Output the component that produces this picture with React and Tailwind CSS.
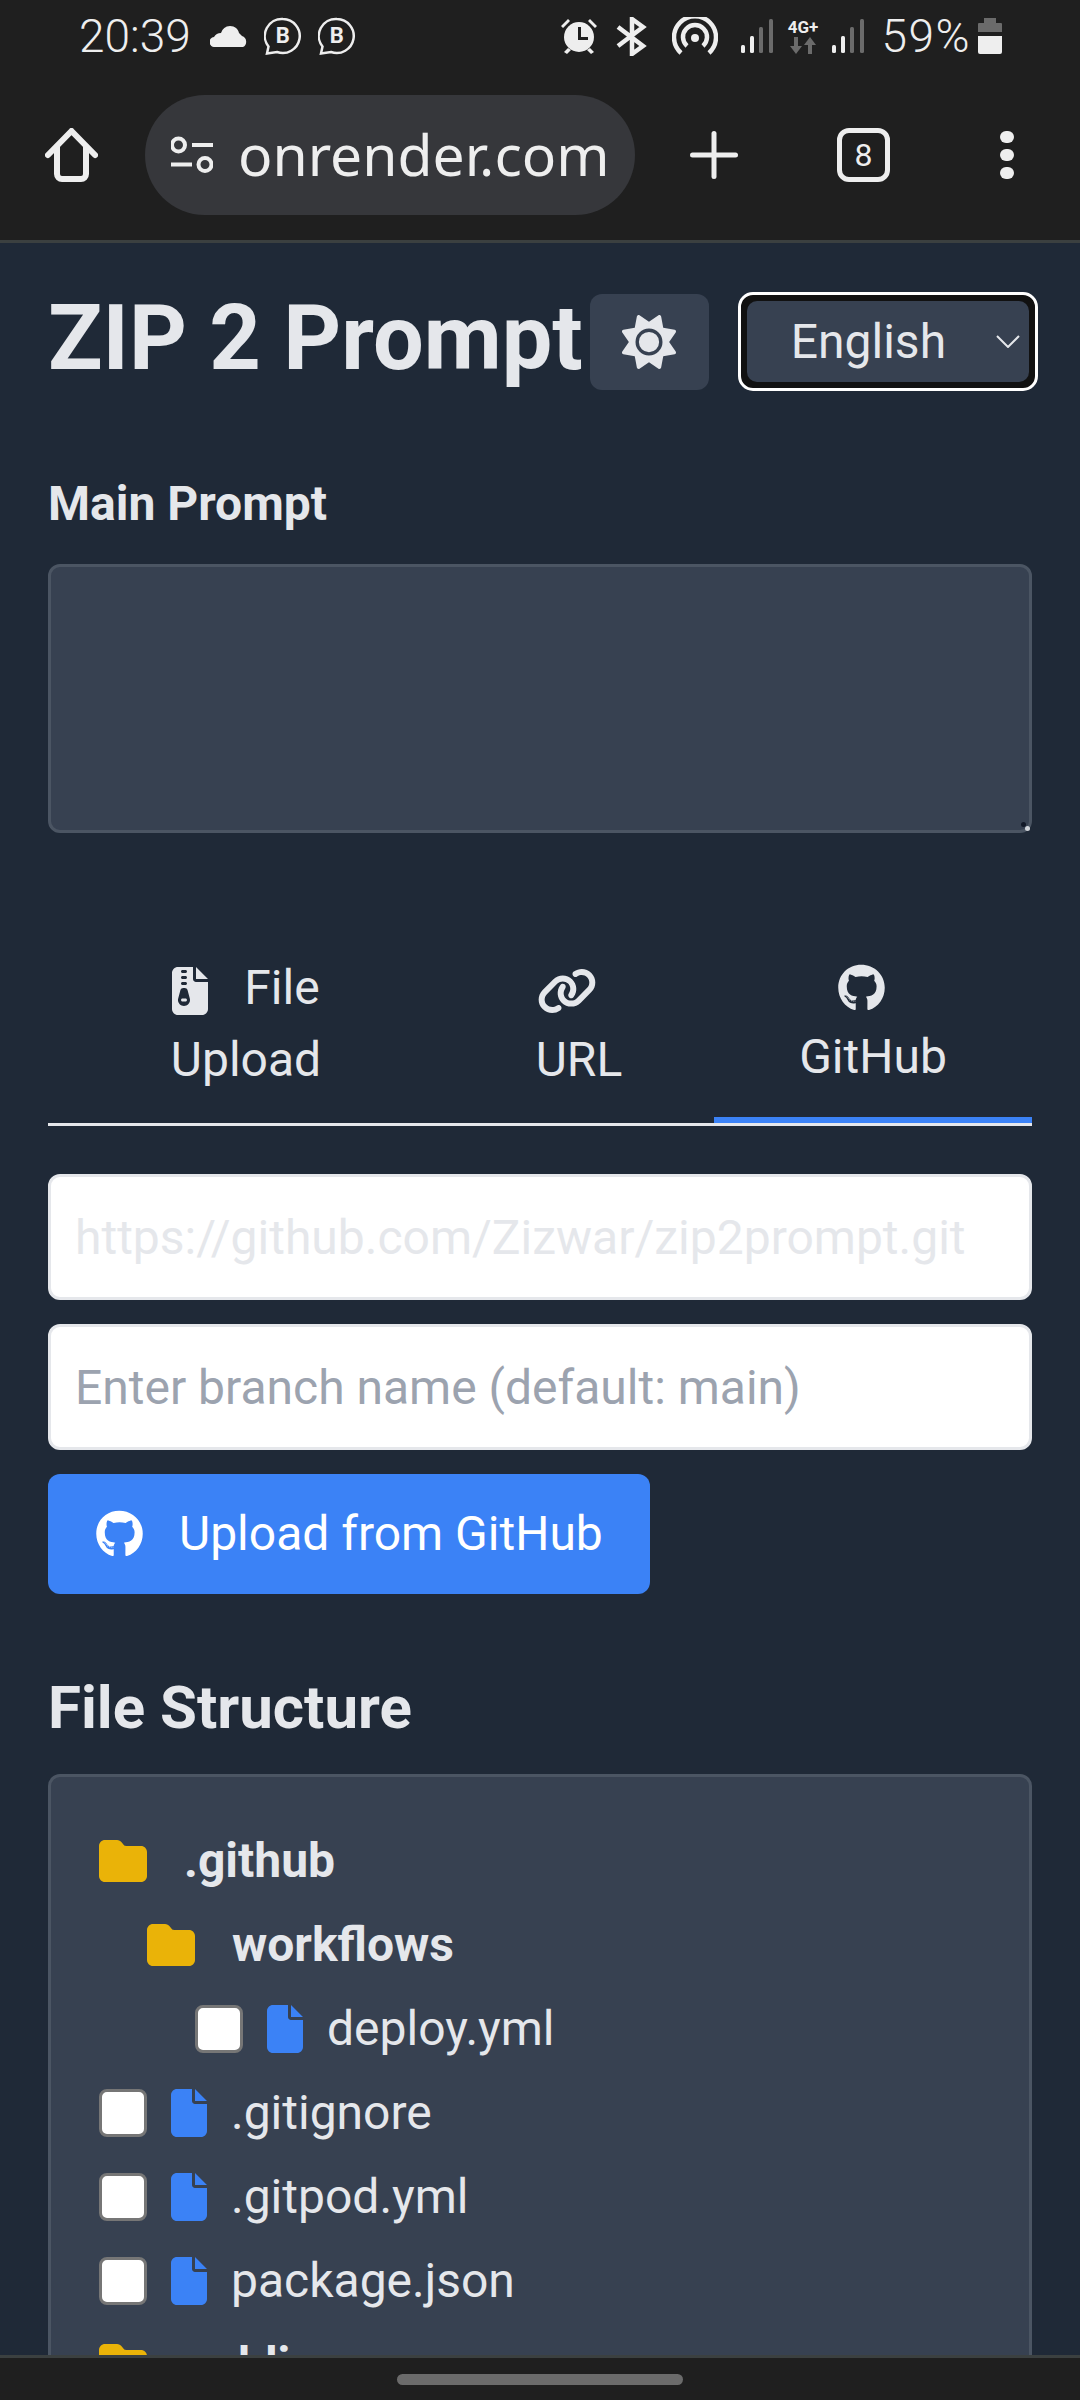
import { FaFileZipper, FaFile, FaFolder, FaGithub, FaSun, FaLink } from "react-icons/fa6";

function Signal() {
  return (
    <svg width="32" height="34" viewBox="0 0 32 34">
      <rect x="0" y="26" width="4" height="8" rx="1.5" fill="#eeeeee" />
      <rect x="9" y="17" width="4" height="17" rx="1.5" fill="#eeeeee" />
      <rect x="18" y="8" width="4" height="26" rx="1.5" fill="#6b6b6b" />
      <rect x="28" y="0" width="4" height="34" rx="1.5" fill="#6b6b6b" />
    </svg>
  );
}

function BusinessChat() {
  return (
    <div className="relative w-[38px] h-[38px]">
      <svg width="38" height="38" viewBox="0 0 38 38" fill="none">
        <path d="M19 2a17 17 0 1 1-6 33l-10 1.500 1.500-7A17 17 0 0 1 19 2z" stroke="#eeeeee" strokeWidth="2.500" />
      </svg>
      <span className="absolute inset-0 flex items-center justify-center text-[22px] font-bold text-[#eeeeee] leading-none">B</span>
    </div>
  );
}

function StatusBar() {
  return (
    <div className="h-[72px] flex items-center pl-[79px] pr-[78px] text-[#eeeeee]">
      <span className="text-[46px] font-light leading-none">20:39</span>
      <svg className="ml-[19px]" width="38" height="21" viewBox="0 0 38 21" fill="#eeeeee">
        <path d="M5 21a5 5 0 0 1-1-10 8 8 0 0 1 7-4 10 10 0 0 1 9-7c5 0 8 3 9 7 1 1 2 2 3 3a6 6 0 0 1 1 11z" />
      </svg>
      <div className="ml-[16px]"><BusinessChat /></div>
      <div className="ml-[16px]"><BusinessChat /></div>

      <div className="ml-auto flex items-center">
        <svg width="38" height="36" viewBox="0 0 38 36" fill="#eeeeee">
          <circle cx="19" cy="19" r="15" />
          <path d="M18 9h3v10h7v3H18z" fill="#1f1f1f" />
          <path d="M1 8 8 1l2 2-7 7zM37 8 30 1l-2 2 7 7z" />
          <path d="M8 30l3 2-4 4-3-2zM30 30l-3 2 4 4 3-2z" />
        </svg>
        <svg className="ml-[17px]" width="33" height="39" viewBox="0 0 33 39" fill="none" stroke="#eeeeee" strokeWidth="4.500">
          <path d="M3 10l25 19-11 8V2l11 8L3 29" />
        </svg>
        <svg className="ml-[24px]" width="46" height="38" viewBox="0 0 46 38" fill="none" stroke="#eeeeee" strokeWidth="4.500">
          <path d="M9 36a21 21 0 1 1 28 0" />
          <path d="M15 29a12 12 0 1 1 16 0" />
          <circle cx="23" cy="21" r="4" fill="#eeeeee" stroke="none" />
        </svg>
        <div className="ml-[23px]"><Signal /></div>
        <div className="ml-[12px] w-[35px] flex flex-col items-center">
          <span className="text-[17px] font-bold leading-[16px]">4G+</span>
          <svg className="mt-[2px]" width="26" height="17" viewBox="0 0 26 17" fill="#6b6b6b">
            <path d="M4 0h4v9h4l-6 8-6-8h4zM18 17h4V8h4l-6-8-6 8h4z" />
          </svg>
        </div>
        <div className="ml-[12px]"><Signal /></div>
        <span className="ml-[17px] text-[46px] font-light leading-none tracking-[1.500px]">59%</span>
        <svg className="ml-[7px]" width="24" height="36" viewBox="0 0 24 36">
          <path d="M6 0h12v5h5a1 1 0 0 1 1 1v8H0V6a1 1 0 0 1 1-1h5z" fill="#6b6b6b" />
          <path d="M0 18h24v16a2 2 0 0 1-2 2H2a2 2 0 0 1-2-2z" fill="#eeeeee" />
        </svg>
      </div>
    </div>
  );
}

function Toolbar() {
  return (
    <div className="h-[171px] pb-[3px] border-b-[3px] border-[#3b4040] flex items-center pl-[45px] text-[#eeeeee]">
      <svg width="53" height="54" viewBox="0 0 53 54" fill="none" stroke="#eeeeee" strokeWidth="6" strokeLinecap="round" strokeLinejoin="round">
        <path d="M3 27 26.500 3 50 27" />
        <path d="M12 19V46a5 5 0 0 0 5 5H36a5 5 0 0 0 5-5V19" />
      </svg>
      <div className="ml-[47px] w-[490px] h-[120px] rounded-[60px] bg-[#36373b] flex items-center pl-[26px]">
        <svg width="42" height="37" viewBox="0 0 42 37" fill="none" stroke="#eeeeee" strokeWidth="4">
          <circle cx="7.500" cy="9" r="6.500" />
          <path d="M21 9h21M0 28.500h21" />
          <circle cx="34" cy="28.500" r="6.500" />
        </svg>
        <span className="ml-[25px] text-[57px] leading-none font-['Noto_Sans',sans-serif]">onrender.com</span>
      </div>
      <svg className="ml-[55px]" width="48" height="48" viewBox="0 0 48 48" fill="#eeeeee">
        <rect x="0" y="21.500" width="48" height="5" rx="2.500" />
        <rect x="21.500" y="0" width="5" height="48" rx="2.500" />
      </svg>
      <div className="ml-[99px] w-[53px] h-[54px] rounded-[12px] border-[5px] border-[#eeeeee] flex items-center justify-center text-[32px] leading-none">8</div>
      <div className="ml-[110px] w-[14px] flex flex-col gap-[6px]">
        <span className="h-[12px] rounded-full bg-[#eeeeee]" />
        <span className="h-[12px] rounded-full bg-[#eeeeee]" />
        <span className="h-[12px] rounded-full bg-[#eeeeee]" />
      </div>
    </div>
  );
}

function Folder({ name, indent }) {
  return (
    <div className={`flex items-center h-[84px] ${indent}`}>
      <FaFolder className="w-[48px] h-[48px] text-[#eab308]" />
      <span className="ml-[37px] font-bold">{name}</span>
    </div>
  );
}

function FileRow({ name, indent }) {
  return (
    <div className={`flex items-center h-[84px] ${indent}`}>
      <input type="checkbox" className="appearance-none w-[48px] h-[48px] bg-white border-[3px] border-[#767676] rounded-[8px]" />
      <FaFile className="ml-[24px] w-[36px] h-[48px] text-[#3b82f6]" />
      <span className="ml-[24px]">{name}</span>
    </div>
  );
}

export default function App() {
  return (
    <div className="h-[2400px] flex flex-col overflow-hidden bg-[#1f1f1f] font-['Roboto',sans-serif]">
      <StatusBar />
      <Toolbar />

      <main className="flex-1 overflow-hidden bg-[#1f2937] text-[#e5e7eb] px-[48px] pt-[49px]">
        <div className="flex items-center h-[99px]">
          <h1 className="shrink-0 pb-[6px] text-[90px] font-bold leading-none whitespace-nowrap">ZIP 2 Prompt</h1>
          <div className="shrink-0 ml-[7px] w-[119px] h-[96px] rounded-[12px] bg-[#374151] flex items-center justify-center">
            <FaSun className="w-[54px] h-[54px]" />
          </div>
          <div className="ml-[29px] w-[300px] h-[99px] shrink-0 rounded-[15px] border-[3px] border-white bg-[#111111] p-[6px]">
            <div className="h-full rounded-[10px] bg-[#374151] flex items-center pl-[44px] pr-[9px]">
              <span className="text-[48px] leading-none">English</span>
              <svg className="ml-auto" width="24" height="13" viewBox="0 0 24 13" fill="none" stroke="#e5e7eb" strokeWidth="2">
                <path d="M1 1l11 11L23 1" />
              </svg>
            </div>
          </div>
        </div>

        <label className="block mt-[77px] text-[48px] font-bold leading-[72px]">Main Prompt</label>
        <div className="relative mt-[24px]">
          <textarea className="block w-full h-[269px] rounded-[12px] bg-[#374151] border-[3px] border-[#4b5563] resize-none" />
          <span className="absolute right-[6px] bottom-[6px] w-[5px] h-[5px] rounded-full bg-[#111827]" />
          <span className="absolute right-[2px] bottom-[2px] w-[5px] h-[5px] rounded-full bg-[#d1d5db]" />
        </div>

        <div className="mt-[116px] flex border-b-[3px] border-[#e5e7eb] text-[48px] leading-[72px] text-center">
          <div className="w-[396px] px-[96px] pt-[3px] pb-[27px]">
            <FaFileZipper className="inline-block w-[36px] h-[48px] mr-[24px]" /> File Upload
          </div>
          <div className="w-[270px] px-[90px] pt-[3px] pb-[27px]">
            <FaLink className="inline-block w-[60px] h-[48px] mr-[24px]" /> URL
          </div>
          <div className="w-[318px] px-[84px] pb-[24px] border-b-[6px] border-[#3b82f6]">
            <FaGithub className="inline-block w-[47px] h-[48px] mr-[24px]" /> GitHub
          </div>
        </div>

        <input
          className="block mt-[48px] w-full h-[126px] px-[24px] rounded-[12px] bg-white border-[3px] border-[#e5e7eb] text-[48px] placeholder:text-[#e5e7eb]"
          placeholder="https://github.com/Zizwar/zip2prompt.git"
        />
        <input
          className="block mt-[24px] w-full h-[126px] px-[24px] rounded-[12px] bg-white border-[3px] border-[#e5e7eb] text-[48px] placeholder:text-[#9ca3af]"
          placeholder="Enter branch name (default: main)"
        />
        <button className="mt-[24px] w-[602px] h-[120px] rounded-[12px] bg-[#3b82f6] text-white text-[48px] flex items-center pl-[48px]">
          <FaGithub className="w-[47px] h-[48px]" />
          <span className="ml-[36px]">Upload from GitHub</span>
        </button>

        <h2 className="mt-[69px] text-[60px] font-bold leading-[90px]">File Structure</h2>
        <div className="mt-[21px] rounded-[12px] bg-[#374151] border-[3px] border-[#4b5563] pt-[42px] px-[48px] text-[48px] leading-[72px]">
          <Folder name=".github" indent="pl-0" />
          <Folder name="workflows" indent="pl-[48px]" />
          <FileRow name="deploy.yml" indent="pl-[96px]" />
          <FileRow name=".gitignore" indent="pl-0" />
          <FileRow name=".gitpod.yml" indent="pl-0" />
          <FileRow name="package.json" indent="pl-0" />
          <Folder name="public" indent="pl-0" />
        </div>
      </main>

      <div className="h-[45px] shrink-0 border-t-[3px] border-[#3b4040] flex items-center justify-center">
        <span className="w-[286px] h-[11px] rounded-full bg-[#6b6b6b]" />
      </div>
    </div>
  );
}
